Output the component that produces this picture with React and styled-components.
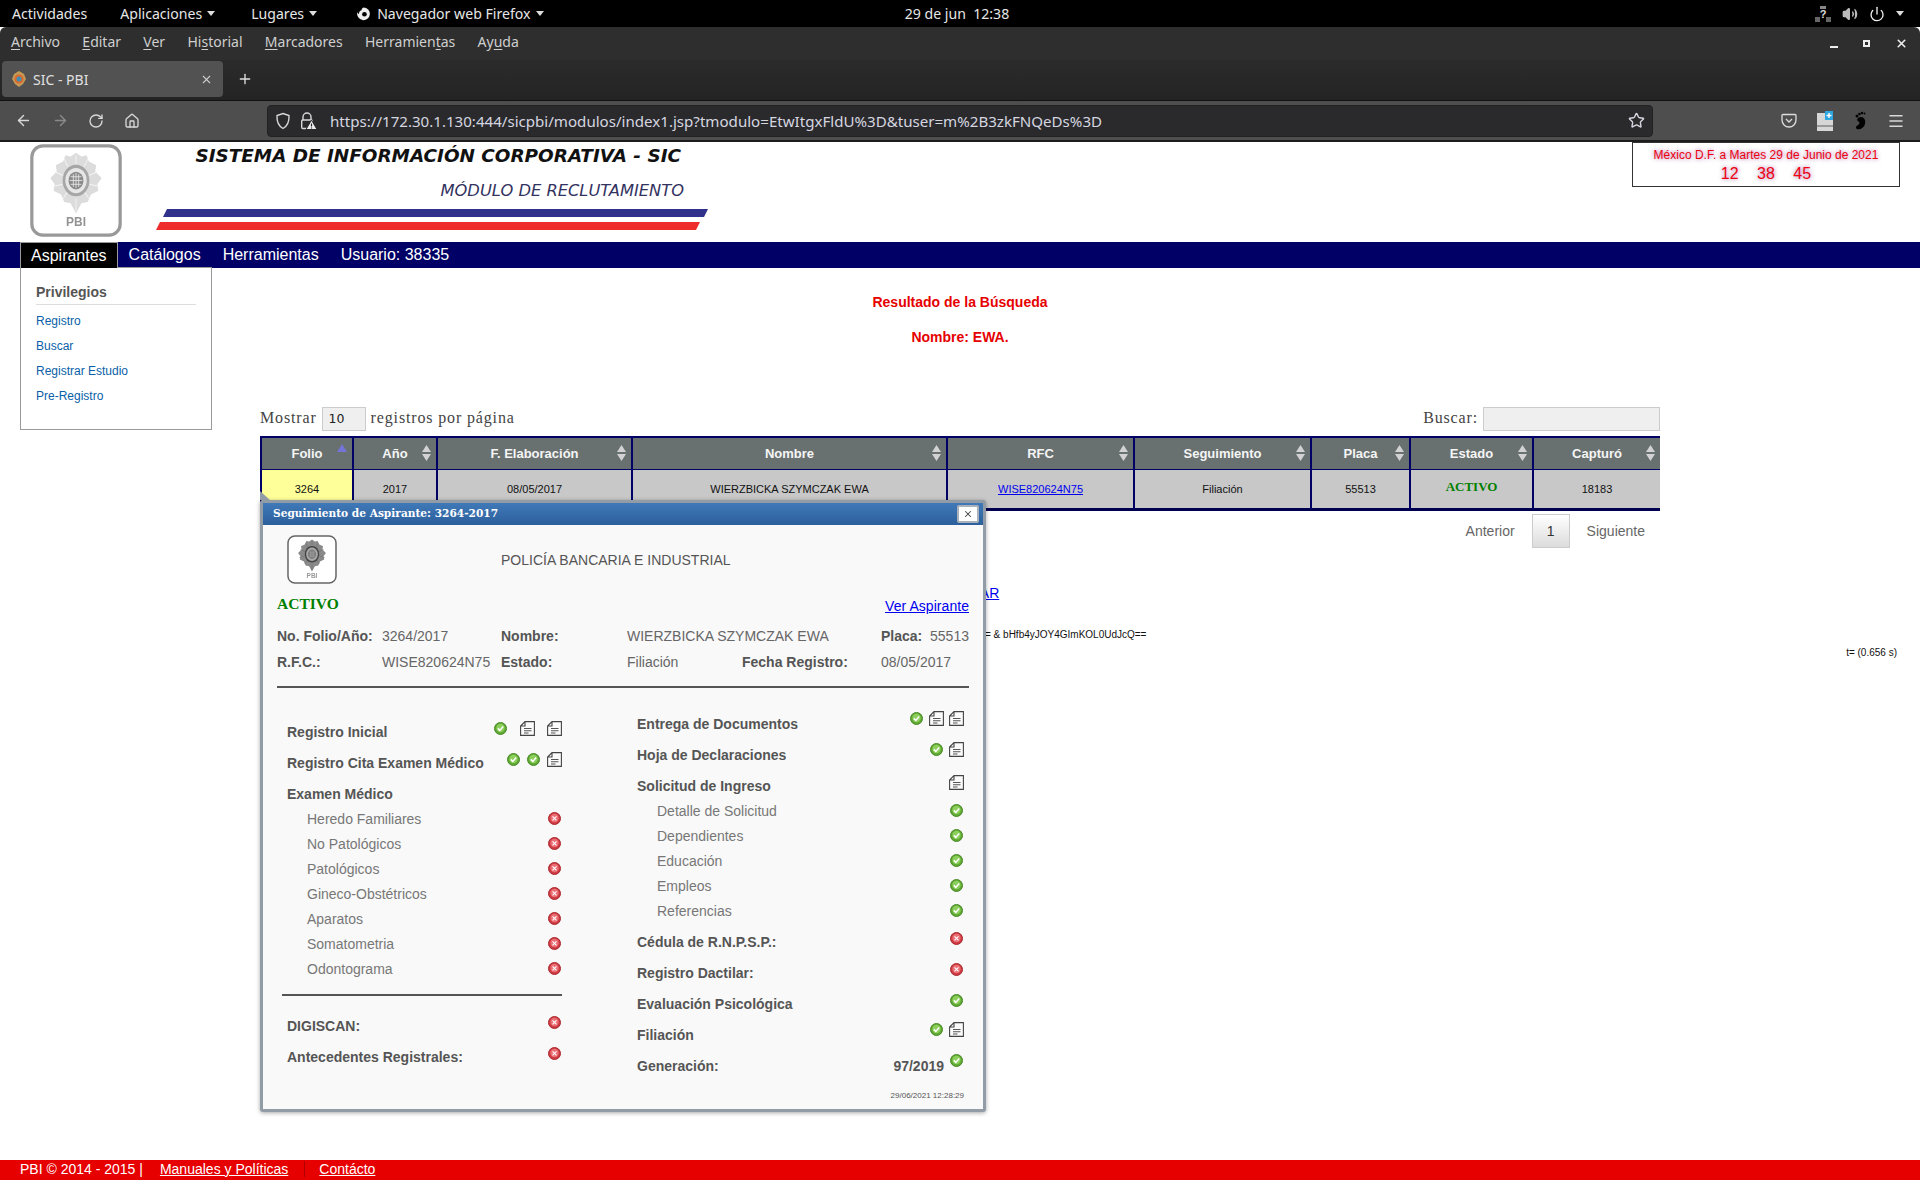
import React from "react"
import styled, { createGlobalStyle } from "styled-components"
import { ArrowLeft, ArrowRight, RotateCw, Home, Star, Menu, Plus, X, Power, Volume2 } from "lucide-react"

const Global = createGlobalStyle`
  html, body { margin: 0; padding: 0; background: #fff; }
  body { font-family: "Liberation Sans", Arial, sans-serif; font-size: 14px; color: #555; }
  * { box-sizing: border-box; }
`

const Page = styled.div`
  width: 1920px;
  height: 1200px;
  display: flex;
  flex-direction: column;
  position: relative;
  overflow: hidden;
  background: #fff;
`

/* gnome shell + firefox chrome */
const ShellBar = styled.div`
  height: 27px;
  background: #000;
  color: #e6e6e6;
  font-family: "Noto Sans", sans-serif;
  font-size: 14.1px;
  display: grid;
  grid-template-columns: 1fr auto 1fr;
  align-items: center;
  padding: 0 16px 0 12px;
`

const ShellLeft = styled.div`
  display: flex;
  align-items: center;
`

const ShellItem = styled.span`
  display: flex;
  align-items: center;
  gap: ${p => p.inner || 5}px;
  margin-right: ${p => p.gap || 30}px;
  white-space: nowrap;
`

const Caret = styled.i`
  display: inline-block;
  width: 0;
  height: 0;
  border-left: 4.5px solid transparent;
  border-right: 4.5px solid transparent;
  border-top: 5px solid #ddd;
`

const Clock = styled.span`
  margin-right: 2px;
`

const Tray = styled.div`
  display: flex;
  justify-content: flex-end;
  align-items: center;
  gap: 11px;
  color: #bbb;
`

const MenuBar = styled.div`
  height: 33px;
  background: #2e2e2e;
  border-radius: 6px 6px 0 0;
  color: #cfcfcf;
  font-family: "Noto Sans", sans-serif;
  font-size: 14px;
  display: flex;
  align-items: center;
  padding: 0 10px 5px 11px;
  gap: 22.3px;
  u { text-underline-offset: 2px; }
`

const WindowButtons = styled.div`
  margin-left: auto;
  display: flex;
  align-items: center;
  gap: 25px;
  padding: 5px 2px 0 0;
`

const Minimize = styled.i`
  width: 8px;
  height: 2px;
  margin-top: 7px;
  background: #eee;
`

const Maximize = styled.i`
  width: 7px;
  height: 7px;
  border: 2px solid #eee;
`

const TabBar = styled.div`
  height: 41px;
  background: linear-gradient(#2b2b2b, #242424);
  border-bottom: 1px solid #111;
  display: flex;
  align-items: flex-start;
  padding: 1px 0 0 2px;
  color: #e0e0e0;
`

const Tab = styled.div`
  width: 221px;
  height: 36px;
  background: #525252;
  border-radius: 4px;
  display: flex;
  align-items: center;
  padding: 0 10px;
  gap: 7px;
  font-family: "Noto Sans", sans-serif;
  font-size: 14px;
  span { flex: 1; }
`

const NewTab = styled.div`
  width: 44px;
  height: 36px;
  display: flex;
  align-items: center;
  justify-content: center;
`

const NavBar = styled.div`
  height: 41px;
  background: #4e4e4e;
  border-bottom: 2px solid #1c1c1c;
  display: flex;
  align-items: center;
  color: #d8d8d8;
`

const NavButtons = styled.div`
  width: 267px;
  padding-left: 15px;
  display: flex;
  gap: 19.5px;
  align-items: center;
`

const UrlBar = styled.div`
  width: 1386px;
  height: 32px;
  background: #2a2a2c;
  border: 1px solid #222;
  border-radius: 4px;
  display: flex;
  align-items: center;
  padding: 0 7px;
  gap: 9px;
  font-family: "Noto Sans", sans-serif;
  font-size: 15.1px;
  color: #d6d6e0;
  span { flex: 1; margin-left: 4px; white-space: nowrap; }
`

const ToolIcons = styled.div`
  flex: 1;
  display: flex;
  justify-content: flex-end;
  align-items: center;
  gap: 20px;
  padding-right: 15px;
`

/* page header */
const Header = styled.header`
  height: 100px;
  display: flex;
  background: #fff;
  padding: 2px 20px 0 30px;
`

const TitleBlock = styled.div`
  margin-left: 34px;
  width: 552px;
  display: flex;
  flex-direction: column;
  align-items: flex-end;
`

const SystemName = styled.div`
  margin-right: 27px;
  font-family: "DejaVu Sans", sans-serif;
  font-weight: 700;
  font-style: italic;
  font-size: 18.4px;
  line-height: 24px;
  color: #111;
  white-space: nowrap;
`

const ModuleName = styled.div`
  margin: 13px 24px 8px 0;
  font-family: "DejaVu Sans", sans-serif;
  font-style: italic;
  font-size: 16.3px;
  line-height: 20px;
  color: #33335f;
  white-space: nowrap;
`

const DateBox = styled.div`
  margin: -2px 0 0 auto;
  width: 268px;
  height: 45px;
  border: 1px solid #333;
  text-align: center;
  color: #ee0010;
  text-shadow: 0 0 4px rgba(120, 30, 120, 0.7);
`

const DateLine = styled.div`
  font-size: 12px;
  line-height: 14px;
  margin-top: 5px;
`

const TimeLine = styled.div`
  font-size: 16px;
  line-height: 18px;
  margin-top: 3px;
  word-spacing: 14px;
`

const MainNav = styled.nav`
  height: 26px;
  background: #000066;
  display: flex;
  padding-left: 20px;
  color: #fff;
  font-size: 16px;
`

const NavItem = styled.div`
  padding: 0 ${p => (p.active ? 10 : 11)}px;
  background: ${p => (p.active ? "#000" : "transparent")};
  border: ${p => (p.active ? "1px solid #999" : "none")};
  border-bottom: none;
  line-height: ${p => (p.active ? 25 : 26)}px;
  height: 26px;
  z-index: 2;
`

const Privileges = styled.aside`
  position: absolute;
  left: 20px;
  top: 267px;
  width: 192px;
  height: 163px;
  background: #fff;
  border: 1px solid #999;
  padding: 15px 15px;
  z-index: 1;
`

const PrivTitle = styled.div`
  font-weight: 700;
  font-size: 14px;
  line-height: 18px;
  color: #555;
  padding-bottom: 3px;
  border-bottom: 1px solid #ddd;
  margin-bottom: 4px;
`

const PrivLink = styled.a`
  display: block;
  font-size: 12px;
  line-height: 25px;
  color: #0a5fa8;
`

const Content = styled.main`
  flex: 1;
  padding-top: 24px;
  background: #fff;
`

const Heading = styled.div`
  text-align: center;
  color: #e60000;
  font-weight: 700;
  font-size: 14px;
  line-height: 20px;
  margin-bottom: 15px;
`

const Wrap = styled.div`
  width: 1400px;
  margin: 60px 0 0 260px;
`

const Controls = styled.div`
  height: 24px;
  display: flex;
  justify-content: space-between;
  font-family: "Liberation Serif", serif;
  font-size: 16px;
  letter-spacing: 0.85px;
  color: #444;
`

const Control = styled.label`
  display: flex;
  align-items: center;
  gap: 5px;
  padding-bottom: 2px;
`

const Field = styled.div`
  width: ${p => p.w}px;
  height: 24px;
  margin-bottom: -2px;
  background: #efefef;
  border: 1px solid #ccc;
  font-family: "DejaVu Sans", sans-serif;
  font-size: 12.5px;
  letter-spacing: 0;
  line-height: 22px;
  color: #222;
  padding-left: 6px;
`

const Grid = styled.table`
  width: 1400px;
  margin-top: 5px;
  table-layout: fixed;
  border-collapse: separate;
  border-spacing: 0;
  border-left: 2px solid #000066;
`

const Th = styled.th`
  position: relative;
  height: 34px;
  padding: 0;
  background: #697170;
  color: #f5f5f5;
  font-size: 13px;
  font-weight: 700;
  border-top: 2px solid #000066;
  border-bottom: 1px solid #000066;
  border-right: 2px solid #000066;
  &:last-child { border-right: none; }
`

const SortMark = styled.svg`
  position: absolute;
  right: ${p => p.right || 5}px;
  top: ${p => p.top || 7}px;
`

const Td = styled.td`
  height: 41px;
  padding: 0;
  text-align: center;
  font-size: 11px;
  color: #111;
  background: ${p => (p.mark ? "#ffff99" : "#c8c8c8")};
  border-bottom: 3px solid #000050;
  border-right: 2px solid #000066;
  &:last-child { border-right: none; }
  a { color: #0000ee; }
`

const TableState = styled.b`
  font-family: "Liberation Serif", serif;
  font-size: 13px;
  color: #008000;
  position: relative;
  top: -2px;
`

const Pager = styled.div`
  margin-top: 3px;
  height: 34px;
  display: flex;
  justify-content: flex-end;
  align-items: center;
  padding-right: 15px;
  gap: 17px;
  color: #666;
`

const PageNumber = styled.div`
  width: 38px;
  height: 34px;
  border: 1px solid #ccc;
  background: linear-gradient(#fff, #dcdcdc);
  color: #333;
  text-align: center;
  line-height: 32px;
`

const Back = styled.a`
  display: block;
  margin-top: 35px;
  text-align: center;
  line-height: 20px;
  color: #0000ee;
  text-decoration: underline;
`

const HashLine = styled.div`
  margin-top: 25px;
  padding-left: 985px;
  font-size: 10px;
  line-height: 14px;
  color: #111;
`

const Timing = styled.div`
  margin-top: 4px;
  padding-right: 23px;
  text-align: right;
  font-size: 10px;
  line-height: 14px;
  color: #111;
`

const Footer = styled.footer`
  height: 20px;
  margin-bottom: 20px;
  background: #e60000;
  color: #fff;
  display: flex;
  align-items: center;
  padding: 0 0 2px 20px;
  font-size: 14px;
  a { color: #fff; text-decoration: underline; }
`

const FootLink = styled.a`
  margin-left: ${p => p.gap}px;
`

const FootSep = styled.i`
  width: 1px;
  height: 16px;
  margin-left: 16px;
  background: #b00000;
`

/* seguimiento dialog */
const Dialog = styled.section`
  position: absolute;
  left: 260px;
  top: 500px;
  width: 726px;
  height: 612px;
  background: #f9f9f9;
  border: 3px solid #929ca6;
  border-radius: 3px;
  box-shadow: 0 1px 4px rgba(0, 0, 0, 0.35);
  z-index: 3;
  &::before {
    content: "";
    position: absolute;
    left: -3px;
    top: -12px;
    border-left: 10px solid #929ca6;
    border-top: 9px solid transparent;
  }
`

const DialogTitle = styled.div`
  height: 22px;
  background: linear-gradient(#4079b8, #2c5f9c);
  color: #fff;
  font-family: "DejaVu Serif", serif;
  font-weight: 700;
  font-size: 10.6px;
  line-height: 21px;
  padding-left: 10px;
  position: relative;
`

const CloseButton = styled.button`
  position: absolute;
  right: 4px;
  top: 2px;
  width: 22px;
  height: 18px;
  padding: 0;
  background: #fff;
  border: 2px solid #a9b2bb;
  border-radius: 2px;
  color: #444;
  display: flex;
  align-items: center;
  justify-content: center;
`

const DialogBody = styled.div`
  padding: 10px 14px 0 14px;
`

const BrandRow = styled.div`
  height: 49px;
  display: flex;
  align-items: center;
  padding-left: 10px;
`

const BrandName = styled.div`
  margin-left: 164px;
  color: #555;
`

const StatusRow = styled.div`
  margin-top: 8px;
  height: 28px;
  display: flex;
  justify-content: space-between;
  align-items: center;
`

const StatusText = styled.b`
  font-family: "Liberation Serif", serif;
  font-size: 15.5px;
  color: #008000;
  margin-bottom: 4px;
`

const SeeLink = styled.a`
  color: #0000ee;
  text-decoration: underline;
  letter-spacing: 0.05px;
`

const InfoGrid = styled.div`
  margin-top: 3px;
  display: grid;
  grid-template-columns: 105px 119px 126px 115px 139px 88px;
  grid-auto-rows: 26px;
  align-items: center;
  white-space: nowrap;
`

const Label = styled.b`
  color: #555;
`

const Value = styled.span`
  color: #666;
  grid-column: ${p => p.span || "auto"};
`

const Divider = styled.hr`
  margin: ${p => p.m || "11px 0 0"};
  border: none;
  height: 2px;
  background: #555;
`

const Columns = styled.div`
  display: flex;
  align-items: flex-start;
`

const LeftCol = styled.div`
  width: 280px;
  margin-left: 5px;
  padding-top: 28px;
`

const RightCol = styled.div`
  width: 327px;
  margin-left: 75px;
  padding-top: 20px;
`

const Row = styled.div`
  height: ${p => (p.sub ? 25 : p.group ? 25 : 31)}px;
  margin-top: ${p => (p.group ? 3 : 0)}px;
  margin-bottom: ${p => (p.last ? 3 : 0)}px;
  display: flex;
  align-items: center;
  padding-left: ${p => (p.indent ? 20 : 0)}px;
  font-weight: ${p => (p.sub ? 400 : 700)};
  color: ${p => (p.sub ? "#777" : "#555")};
  white-space: nowrap;
`

const LeftRows = styled.div`
  padding-left: 5px;
`

const Icons = styled.div`
  margin-left: ${p => (p.near ? "6px" : "auto")};
  margin-bottom: ${p => (p.lift || 0) * 2}px;
  display: flex;
  align-items: center;
  gap: ${p => p.gap || 5}px;
`

const GenValue = styled.span`
  margin-left: auto;
`

const Stamp = styled.div`
  text-align: right;
  font-size: 8px;
  line-height: 10px;
  color: #555;
  margin-top: 10px;
`

const SealMark = styled.svg`
  flex: none;
  filter: blur(${p => (p.$soft ? 0.4 : 0)}px);
`

const StatusIcon = ({ ok }) => (
  <svg width="14" height="13" viewBox="0 0 14 13">
    <circle cx="6.5" cy="6.5" r="6" fill={ok ? "#5fa833" : "#cf3a42"} stroke={ok ? "#4a8a28" : "#a92a30"} />
    <circle cx="6.5" cy="6" r="4.200" fill={ok ? "#8ccf5c" : "#ea7075"} />
    {ok ? (
      <path d="M3.8 6.4l2 2 3.4-4" fill="none" stroke="#fff" strokeWidth="1.5" />
    ) : (
      <path d="M4.5 4.3l4 4M8.500 4.300l-4 4" fill="none" stroke="#fff" strokeWidth="1.1" />
    )}
  </svg>
)

const DocIcon = () => (
  <svg width="15" height="15" viewBox="0 0 15 15">
    <path d="M5 .6h9.400v13.800H.6V5z M5 .6V5H.6" fill="#fbfbfb" stroke="#444" strokeWidth="1.100" />
    <path d="M4 7.500h7.500M4 9.800h7.500M4 12h4.500" stroke="#555" strokeWidth="1.100" />
  </svg>
)

const BADGE = "50,2 60,8 70,6 74,16 88,22 86,32 98,42 90,52 92,62 78,68 72,80 60,82 50,98 40,82 28,80 22,68 8,62 10,52 2,42 14,32 12,22 26,16 30,6 40,8"
const RAYS = "M50 6v14M72 12L64 26M90 32L74 38M94 56L76 52M74 74L64 62M26 74l10-12M6 56l18-4M10 32l16 6M28 12l8 14M50 94V74"

const Seal = ({ w, h, stroke, sw, r, fill, ray, ring, inner, core, label, soft }) => (
  <SealMark $soft={soft} width={w} height={h} viewBox="0 0 100 100" preserveAspectRatio="none">
    <rect x="2" y="2" width="96" height="96" rx={r} fill="#fff" stroke={stroke} strokeWidth={sw} />
    <g transform="translate(21 8) scale(.58 .68)">
      <polygon points={BADGE} fill={fill} />
      <path d={RAYS} stroke={ray} strokeWidth="1.600" fill="none" />
      <circle cx="50" cy="46" r="25" fill={ring} />
      <circle cx="50" cy="46" r="20" fill={inner} />
      <circle cx="50" cy="46" r="14" fill={core} />
      <path d="M40 40h20M38 46h24M40 52h20M45 36v20M50 34v24M55 36v20" stroke={inner} strokeWidth="1.500" />
    </g>
    <text x="50" y="88" textAnchor="middle" fontFamily="Liberation Sans" fontWeight="700" fontSize="13" fill={label}>PBI</text>
  </SealMark>
)

const Stripes = () => (
  <svg width="552" height="21" viewBox="0 0 552 21">
    <polygon points="11,0 552,0 548,8 7,8" fill="#2f318a" />
    <polygon points="4,13 544,13 540,21 0,21" fill="#ee2c2c" />
  </svg>
)

const FirefoxMark = () => (
  <svg width="15" height="15" viewBox="0 0 16 16">
    <path d="M8 1.500a6.800 6.800 0 1 1-6.600 5.200c.4 1 1 1.600 1.700 1.900C3 6 4.600 4.800 6 4.500 5.700 3.400 6.500 2 8 1.500z" fill="#eee" />
    <circle cx="9" cy="8.800" r="2.500" fill="#000" />
  </svg>
)

const Favicon = () => (
  <svg width="14" height="16" viewBox="0 0 14 16">
    <polygon points="7,0 12,3 14,8 11,13 7,16 3,13 0,8 2,3" fill="#c59a55" />
    <circle cx="7" cy="8" r="4.500" fill="#d9682f" />
    <circle cx="7" cy="8" r="2.500" fill="#3f8fb5" />
  </svg>
)

const ShieldIcon = () => (
  <svg width="16" height="18" viewBox="0 0 16 18">
    <path d="M8 1.500l6 2c.3 6-1.500 10.500-6 13-4.500-2.500-6.300-7-6-13z" fill="none" stroke="#d8d8d8" strokeWidth="1.400" />
  </svg>
)

const WarnLock = () => (
  <svg width="17" height="18" viewBox="0 0 17 18">
    <path d="M3 8V5a4 4 0 0 1 8 0v3" fill="none" stroke="#d8d8d8" strokeWidth="1.400" />
    <rect x="1.700" y="8" width="10.600" height="8.500" rx="1.200" fill="none" stroke="#d8d8d8" strokeWidth="1.400" />
    <polygon points="11.500,8 17,17.500 6,17.500" fill="#eee" stroke="#2a2a2c" />
    <path d="M11.500 11.500v3M11.500 15.500v1" stroke="#222" strokeWidth="1.200" />
  </svg>
)

const PocketIcon = () => (
  <svg width="16" height="16" viewBox="0 0 16 16">
    <path d="M2 1.500h12a1 1 0 0 1 1 1V7a7 7 0 0 1-14 0V2.500a1 1 0 0 1 1-1z" fill="none" stroke="#ddd" strokeWidth="1.300" />
    <path d="M5 6l3 3 3-3" fill="none" stroke="#ddd" strokeWidth="1.300" />
  </svg>
)

const ExtensionIcon = () => (
  <svg width="16" height="20" viewBox="0 0 16 20">
    <rect x="0" y="2" width="16" height="18" fill="#d6d6d6" />
    <rect x="0" y="14" width="16" height="2" fill="#999" />
    <rect x="8" y="0" width="8" height="9" fill="#2ea6e0" />
    <path d="M12 2v5M9.500 4.500h5" stroke="#fff" strokeWidth="1.400" />
  </svg>
)

const FootIcon = () => (
  <svg width="14" height="19" viewBox="0 0 14 19">
    <path d="M8 6c3 0 5 3 4 7s-5 6-8 5c-2-1-1-3 1-4s2-3 0-4 0-4 3-4z" fill="#000" />
    <circle cx="4" cy="5" r="1.500" fill="#000" />
    <circle cx="6.500" cy="3" r="1.300" fill="#000" />
    <circle cx="9" cy="2" r="1.200" fill="#000" />
    <circle cx="11.500" cy="2.500" r="1" fill="#000" />
  </svg>
)

const NetworkIcon = () => (
  <svg width="16" height="16" viewBox="0 0 16 16">
    <rect x="5" y="0" width="6" height="3" fill="#888" />
    <rect x="0" y="11" width="5" height="5" fill="#666" />
    <rect x="11" y="11" width="5" height="5" fill="#666" />
    <text x="8" y="12" textAnchor="middle" fontFamily="Liberation Sans" fontWeight="700" fontSize="11" fill="#ddd">?</text>
  </svg>
)

const SortArrows = ({ only, right }) =>
  only ? (
    <SortMark width="10" height="8" viewBox="0 0 10 8" right={right} top={6}>
      <polygon points="5,0 10,8 0,8" fill="#7474d6" />
    </SortMark>
  ) : (
    <SortMark width="9" height="16" viewBox="0 0 9 16" right={right}>
      <polygon points="4.500,0 9,7 0,7" fill="#d2d2d2" />
      <polygon points="0,9 9,9 4.500,16" fill="#d2d2d2" />
    </SortMark>
  )

const columns = [
  ["Folio", 92],
  ["Año", 84],
  ["F. Elaboración", 195],
  ["Nombre", 315],
  ["RFC", 187],
  ["Seguimiento", 177],
  ["Placa", 99],
  ["Estado", 123],
  ["Capturó", 126],
]

const medical = ["Heredo Familiares", "No Patológicos", "Patológicos", "Gineco-Obstétricos", "Aparatos", "Somatometria", "Odontograma"]
const request = ["Detalle de Solicitud", "Dependientes", "Educación", "Empleos", "Referencias"]

export default function App() {
  return (
    <Page>
      <Global />
      <ShellBar>
        <ShellLeft>
          <ShellItem gap={33}>Actividades</ShellItem>
          <ShellItem gap={36}>Aplicaciones <Caret /></ShellItem>
          <ShellItem gap={39}>Lugares <Caret /></ShellItem>
          <ShellItem inner={6}><FirefoxMark /> Navegador web Firefox <Caret /></ShellItem>
        </ShellLeft>
        <Clock>29 de jun&nbsp; 12:38</Clock>
        <Tray>
          <NetworkIcon />
          <Volume2 size={16} fill="#bbb" />
          <Power size={16} color="#eee" />
          <Caret />
        </Tray>
      </ShellBar>
      <MenuBar>
        <span><u>A</u>rchivo</span>
        <span><u>E</u>ditar</span>
        <span><u>V</u>er</span>
        <span>Hi<u>s</u>torial</span>
        <span><u>M</u>arcadores</span>
        <span>Herramien<u>t</u>as</span>
        <span>Ay<u>u</u>da</span>
        <WindowButtons>
          <Minimize />
          <Maximize />
          <X size={13} strokeWidth={3} color="#eee" />
        </WindowButtons>
      </MenuBar>
      <TabBar>
        <Tab>
          <Favicon />
          <span>SIC - PBI</span>
          <X size={13} color="#ccc" />
        </Tab>
        <NewTab><Plus size={16} /></NewTab>
      </TabBar>
      <NavBar>
        <NavButtons>
          <ArrowLeft size={17} />
          <ArrowRight size={17} color="#8a8a8a" />
          <RotateCw size={16} />
          <Home size={16} />
        </NavButtons>
        <UrlBar>
          <ShieldIcon />
          <WarnLock />
          <span>https://172.30.1.130:444/sicpbi/modulos/index1.jsp?tmodulo=EtwItgxFldU%3D&amp;tuser=m%2B3zkFNQeDs%3D</span>
          <Star size={17} />
        </UrlBar>
        <ToolIcons>
          <PocketIcon />
          <ExtensionIcon />
          <FootIcon />
          <Menu size={18} />
        </ToolIcons>
      </NavBar>

      <Header>
        <Seal soft w={92} h={93} stroke="#999" sw={3.500} r={12} fill="#dcdcdc" ray="#f4f4f4" ring="#a6a6a6" inner="#e6e6e6" core="#8a8a8a" label="#929292" />
        <TitleBlock>
          <SystemName>SISTEMA DE INFORMACIÓN CORPORATIVA - SIC</SystemName>
          <ModuleName>MÓDULO DE RECLUTAMIENTO</ModuleName>
          <Stripes />
        </TitleBlock>
        <DateBox>
          <DateLine>México D.F. a Martes 29 de Junio de 2021</DateLine>
          <TimeLine>12 38 45</TimeLine>
        </DateBox>
      </Header>
      <MainNav>
        <NavItem active>Aspirantes</NavItem>
        <NavItem>Catálogos</NavItem>
        <NavItem>Herramientas</NavItem>
        <NavItem>Usuario: 38335</NavItem>
      </MainNav>
      <Privileges>
        <PrivTitle>Privilegios</PrivTitle>
        <PrivLink>Registro</PrivLink>
        <PrivLink>Buscar</PrivLink>
        <PrivLink>Registrar Estudio</PrivLink>
        <PrivLink>Pre-Registro</PrivLink>
      </Privileges>

      <Content>
        <Heading>Resultado de la Búsqueda</Heading>
        <Heading>Nombre: EWA.</Heading>
        <Wrap>
          <Controls>
            <Control>Mostrar <Field w={44}>10</Field> registros por página</Control>
            <Control>Buscar: <Field w={177} /></Control>
          </Controls>
          <Grid>
            <colgroup>
              {columns.map(([name, w]) => <col key={name} style={{ width: w }} />)}
            </colgroup>
            <thead>
              <tr>
                {columns.map(([name], i) => (
                  <Th key={name}>{name}<SortArrows only={i === 0} /></Th>
                ))}
              </tr>
            </thead>
            <tbody>
              <tr>
                <Td mark>3264</Td>
                <Td>2017</Td>
                <Td>08/05/2017</Td>
                <Td>WIERZBICKA SZYMCZAK EWA</Td>
                <Td><a href="#rfc">WISE820624N75</a></Td>
                <Td>Filiación</Td>
                <Td>55513</Td>
                <Td><TableState>ACTIVO</TableState></Td>
                <Td>18183</Td>
              </tr>
            </tbody>
          </Grid>
          <Pager>
            <span>Anterior</span>
            <PageNumber>1</PageNumber>
            <span>Siguiente</span>
          </Pager>
        </Wrap>
        <Back>REGRESAR</Back>
        <HashLine>= &amp; bHfb4yJOY4GImKOL0UdJcQ==</HashLine>
        <Timing>t= (0.656 s)</Timing>
      </Content>

      <Footer>
        PBI © 2014 - 2015 |
        <FootLink gap={17}>Manuales y Políticas</FootLink>
        <FootSep />
        <FootLink gap={14}>Contácto</FootLink>
      </Footer>

      <Dialog>
        <DialogTitle>
          Seguimiento de Aspirante: 3264-2017
          <CloseButton><X size={10} strokeWidth={2.500} /></CloseButton>
        </DialogTitle>
        <DialogBody>
          <BrandRow>
            <Seal w={50} h={49} stroke="#666" sw={3} r={14} fill="#8a8a8a" ray="#6a6a6a" ring="#444" inner="#aaa" core="#777" label="#999" />
            <BrandName>POLICÍA BANCARIA E INDUSTRIAL</BrandName>
          </BrandRow>
          <StatusRow>
            <StatusText>ACTIVO</StatusText>
            <SeeLink>Ver Aspirante</SeeLink>
          </StatusRow>
          <InfoGrid>
            <Label>No. Folio/Año:</Label>
            <Value>3264/2017</Value>
            <Label>Nombre:</Label>
            <Value span="4 / 6">WIERZBICKA SZYMCZAK EWA</Value>
            <Value span="6 / 7"><Label>Placa:</Label>&nbsp; 55513</Value>
            <Label>R.F.C.:</Label>
            <Value>WISE820624N75</Value>
            <Label>Estado:</Label>
            <Value>Filiación</Value>
            <Label>Fecha Registro:</Label>
            <Value>08/05/2017</Value>
          </InfoGrid>
          <Divider />
          <Columns>
            <LeftCol>
              <LeftRows>
                <Row>Registro Inicial<Icons lift={3} gap={12}><StatusIcon ok /><DocIcon /><DocIcon /></Icons></Row>
                <Row>Registro Cita Examen Médico<Icons lift={3} gap={6}><StatusIcon ok /><StatusIcon ok /><DocIcon /></Icons></Row>
                <Row group>Examen Médico</Row>
                {medical.map((name, i) => (
                  <Row sub indent key={name} last={i === medical.length - 1}>{name}<Icons><StatusIcon /></Icons></Row>
                ))}
              </LeftRows>
              <Divider m="13px 0 14px" />
              <LeftRows>
                <Row>DIGISCAN:<Icons lift={3}><StatusIcon /></Icons></Row>
                <Row>Antecedentes Registrales:<Icons lift={3}><StatusIcon /></Icons></Row>
              </LeftRows>
            </LeftCol>
            <RightCol>
              <Row>Entrega de Documentos<Icons lift={5}><StatusIcon ok /><DocIcon /><DocIcon /></Icons></Row>
              <Row>Hoja de Declaraciones<Icons lift={5}><StatusIcon ok /><DocIcon /></Icons></Row>
              <Row group>Solicitud de Ingreso<Icons lift={3}><DocIcon /></Icons></Row>
              {request.map((name, i) => (
                <Row sub indent key={name} last={i === request.length - 1}>{name}<Icons><StatusIcon ok /></Icons></Row>
              ))}
              <Row>Cédula de R.N.P.S.P.:<Icons lift={3}><StatusIcon /></Icons></Row>
              <Row>Registro Dactilar:<Icons lift={3}><StatusIcon /></Icons></Row>
              <Row>Evaluación Psicológica<Icons lift={3}><StatusIcon ok /></Icons></Row>
              <Row>Filiación<Icons lift={5}><StatusIcon ok /><DocIcon /></Icons></Row>
              <Row>Generación:<GenValue>97/2019</GenValue><Icons lift={5} near><StatusIcon ok /></Icons></Row>
              <Stamp>29/06/2021 12:28:29</Stamp>
            </RightCol>
          </Columns>
        </DialogBody>
      </Dialog>
    </Page>
  )
}
